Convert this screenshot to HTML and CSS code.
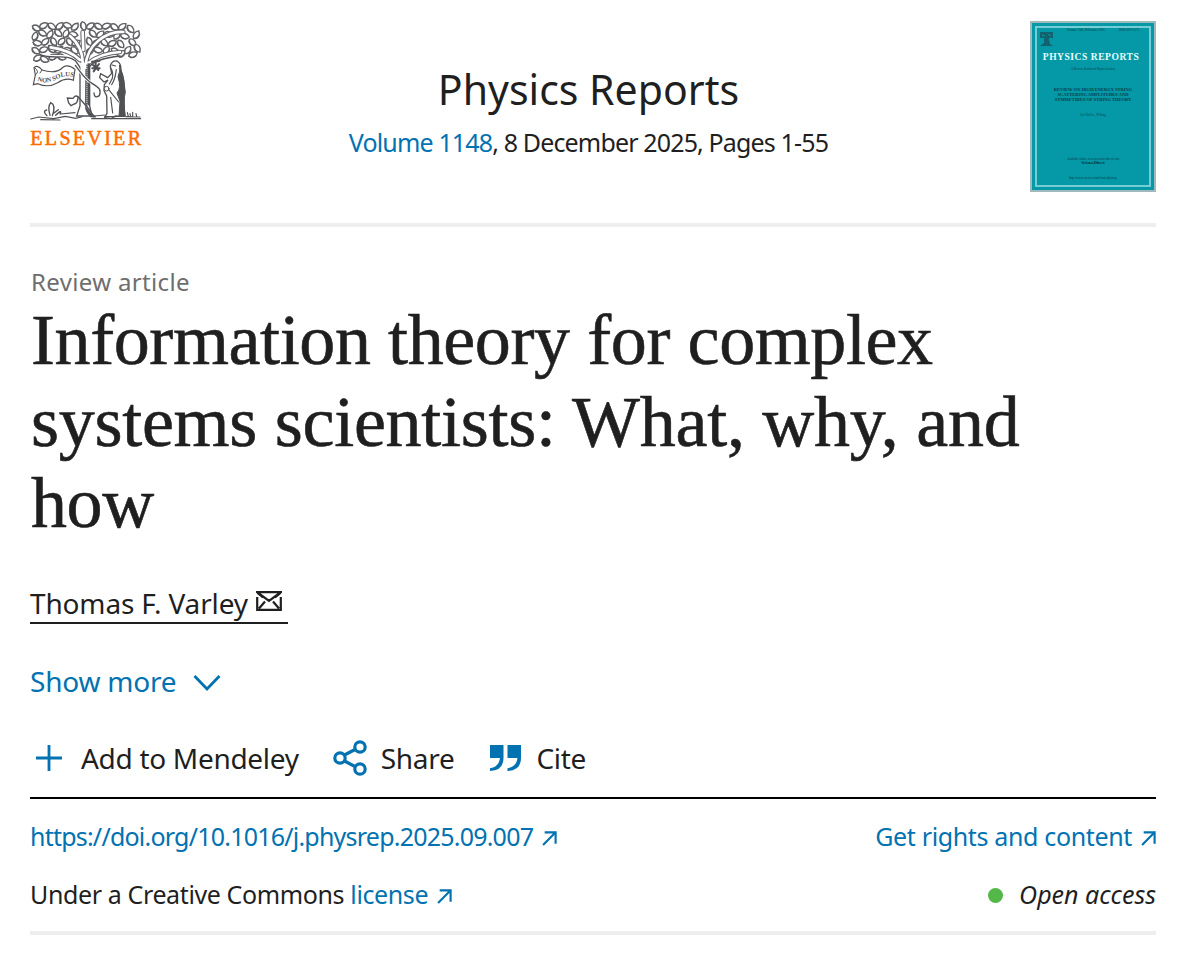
FILE: index.html
```html
<!DOCTYPE html>
<html lang="en">
<head>
  <meta charset="UTF-8">
  <title>Information theory for complex systems scientists</title>
  <link rel="stylesheet" href="styles.css">
</head>
<body>

  <svg class="defs">
    <symbol id="arrow" viewBox="0 0 14 14">
      <path d="M1 13 12.5 1.5M2.5 1.3H12.7V12" fill="none" stroke="currentColor" stroke-width="2"/>
    </symbol>
  </svg>

  <header class="publication">
    <svg class="publisher" viewBox="30 30 339 381">
      <defs>
        <g id="leaf">
          <path d="M-17 1C-12-12 4-13 15-3C9 10-7 13-17 1Z" fill="#fff" stroke="#606165" stroke-width="5"/>
          <path d="M-14 6Q-4 14 9 6" fill="none" stroke="#606165" stroke-width="4"/>
        </g>
      </defs>
      <g id="leaves"></g>
      <g fill="none" stroke="#505155" stroke-linecap="round">
        <!-- trunk and branches -->
        <path d="M60 134C100 150 140 130 166 152L180 172V288L170 318H216L209 288V170Q226 146 300 138" stroke="#505155" stroke-width="4" fill="#fff"/>
        <path d="M196 170Q200 120 235 92T310 66M188 160Q188 110 150 78M180 150Q150 120 92 112M204 160Q240 130 300 126M190 120 188 66" stroke="#606165" stroke-width="14"/>
        <path d="M196 170Q200 120 235 92T310 66M188 160Q188 110 150 78M180 150Q150 120 92 112M204 160Q240 130 300 126M190 120 188 66" stroke="#fff" stroke-width="8"/>
        <path d="M180 158 208 158 205 188H184Z" fill="#fff" stroke="none"/>
        <path d="M198 178V278Q204 304 228 321H212Q194 304 196 284Z" fill="#505155" stroke-width="2"/>
        <path d="M203 164V284" stroke-width="10" stroke-dasharray="3 3" stroke-linecap="butt"/>
        <path d="M206 160V286" stroke-width="7" stroke-linecap="butt"/>
        <path d="M166 166C190 197 192 205 216 220S238 239 235 257Q223 264 222 249" stroke="#fff" stroke-width="9"/>
        <path d="M166 166C190 197 192 205 216 220S244 239 238 257Q223 267 222 249" stroke-width="4"/>
        <path d="M174 260C190 279 205 291 222 321M174 260Q165 254 159 265L142 264 146 279 153 287 163 282Q174 280 174 260Z" fill="#fff" stroke-width="4"/>
        <!-- banner -->
        <path d="M42 173Q53 163 66 180Q108 194 130 171Q145 162 165 178L160 211Q138 201 113 218Q83 235 54 221L40 224 46 195Z" fill="#fff" stroke-width="3.5"/>
        <path d="M44 173Q61 187 46 194M66 180 60 189" stroke-width="3"/>
        <!-- old man -->
        <path d="M271 168Q275 151 291 153Q305 161 302 180Q316 211 311 245L314 319 286 318 274 326 254 323 261 310 260 258 252 242 253 224 264 210 252 216 239 203 242 191 263 203 275 190Z" fill="#fff" stroke-width="4"/>
        <path d="M299 166Q302 184 294 200Q305 235 291 249L300 274 297 319H316Q308 275 316 247Q312 200 299 166Z" fill="#505155" stroke-width="3"/>
        <path d="M271 174Q281 185 277 205L268 222M289 179Q285 210 275 224M276 165 287 168M263 235 296 276M272 262 278 309M254 320H288" stroke-width="3.5"/>
        <circle cx="260" cy="236" r="7" fill="#fff" stroke-width="3"/>
        <path d="M216 155 238 153M227 153V174M219 165 235 180M237 162 221 184M217 175 239 175" stroke-width="6"/>
        <!-- ground -->
        <path d="M32 327 56 321 101 326 136 319 167 325 186 320M62 329 120 330M120 312 165 308M215 326H362M222 318 255 315M318 320 360 321M325 319 322 308M332 320 330 311M338 320V307M350 320 348 311" stroke-width="3.5"/>
        <path d="M90 316Q82 291 92 278Q109 285 97 317M81 317Q66 304 80 300M107 316Q126 297 121 311M102 309 115 299" stroke-width="4"/>
      </g>
      <path id="bannerline" d="M52 213Q83 223 111 207Q134 194 162 201" fill="none"/>
      <text class="motto"><textPath href="#bannerline">NON SOLUS</textPath></text>
      <text class="wordmark" x="31" y="404" textLength="332">ELSEVIER</text>
    </svg>

    <div class="publication-title">
      <h2>Physics Reports</h2>
      <div class="volume"><a>Volume 1148</a>, 8 December 2025, Pages 1-55</div>
    </div>

    <div class="cover">
      <div class="cover-inner">
        <div class="cover-top">
          <svg width="13" height="15" viewBox="0 0 13 15">
            <path d="M0 1H13V7H9L10 13 13 15H0L4 12V7H0Z" fill="#13626f"/>
            <path d="M1 10H3M9 8 11 11M2 4 5 5M8 3 11 5" stroke="#0598a6"/>
          </svg>
          <span>Volume 1148, 08 October 2025</span>
          <span>ISSN 0370-1573</span>
        </div>
        <div class="cover-name">PHYSICS REPORTS</div>
        <div class="cover-note">A Review Section of Physics Letters</div>
        <div class="cover-article">REVIEW ON HIGH ENERGY STRING<br>SCATTERING AMPLITUDES AND<br>SYMMETRIES OF STRING THEORY</div>
        <div class="cover-authors">Jen-Chi Lee, Yi Yang</div>
        <div class="cover-available">Available online at www.sciencedirect.com</div>
        <div class="cover-sd">ScienceDirect</div>
        <div class="cover-url">http://www.elsevier.com/locate/physrep</div>
      </div>
    </div>
  </header>

  <main>
    <div class="article-type">Review article</div>
    <h1>Information theory for complex<br><span>systems scientists: What, why, and</span><br>how</h1>

    <div class="authors">
      <a class="author">
        <span>Thomas F. Varley</span>
        <svg width="26" height="20" viewBox="0 0 26 20">
          <path d="M1.2 6V18.8H24.8V6M1.2 1.2H24.8L13 10ZM1.5 2 7 6.5M24.5 2 19 6.5M3 17.5 9 10.5M23 17.5 17 10.5" fill="none" stroke="currentColor" stroke-width="2.2"/>
        </svg>
      </a>
    </div>

    <div class="show-more">
      <span>Show more</span>
      <svg width="28" height="18" viewBox="0 0 28 18">
        <path d="M1.5 2 14 15 26.500 2" fill="none" stroke="currentColor" stroke-width="2.8"/>
      </svg>
    </div>

    <div class="actions">
      <div class="action mendeley">
        <svg width="28" height="28" viewBox="0 0 28 28">
          <path d="M14 1V27M1 14H27" fill="none" stroke="currentColor" stroke-width="2.8"/>
        </svg>
        <span>Add to Mendeley</span>
      </div>
      <div class="action share">
        <svg width="34" height="36" viewBox="0 0 34 36">
          <g fill="none" stroke="currentColor" stroke-width="3.200">
            <path d="M11.500 15 22 9.500M11.500 21 22 26.500"/>
            <circle cx="7" cy="18" r="5.200"/>
            <circle cx="27" cy="7" r="5.200"/>
            <circle cx="27" cy="29" r="5.200"/>
          </g>
        </svg>
        <span>Share</span>
      </div>
      <div class="action cite">
        <svg width="31" height="26" viewBox="0 0 31 26">
          <path d="M0 0H13.500V13Q13.500 25.500 0 26V23.200Q9 22 10 13H0ZM17.500 0H31V13Q31 25.500 17.500 26V23.200Q26.500 22 27.500 13H17.500Z" fill="currentColor"/>
        </svg>
        <span>Cite</span>
      </div>
    </div>

    <div class="row doi-row">
      <a class="doi"><span>https://doi.org/10.1016/j.physrep.2025.09.007</span><svg class="arrow"><use href="#arrow"/></svg></a>
      <a class="rights"><span>Get rights and content</span><svg class="arrow"><use href="#arrow"/></svg></a>
    </div>
    <div class="row license-row">
      <div class="license">Under a Creative Commons <a>license<svg class="arrow"><use href="#arrow"/></svg></a></div>
      <div class="access"><span class="dot"></span><em>Open access</em></div>
    </div>
  </main>

  <script>
    // x, y, rotation of every leaf in the crown
    const leaves = [
      [50, 55, 30], [72, 47, -20], [96, 50, 40], [120, 48, -35], [143, 47, 25], [166, 50, -40],
      [190, 49, 80], [212, 48, -30], [236, 50, 35], [260, 48, -15], [284, 52, 40], [308, 50, -30],
      [332, 58, 55], [350, 74, -50], [46, 78, -60], [68, 70, 35], [91, 73, -50], [115, 70, 50],
      [139, 70, -55], [161, 74, 20], [219, 72, 50], [242, 73, -35], [267, 74, 25], [292, 76, -45],
      [315, 79, 20], [338, 98, 50], [53, 100, 15], [77, 95, -35], [101, 96, 65], [126, 94, -40],
      [149, 97, 60], [169, 99, -20], [208, 96, 70], [229, 99, -30], [253, 98, 50], [278, 100, -20],
      [302, 103, 60], [324, 120, -45], [352, 116, 65], [48, 123, 40], [72, 119, -15], [95, 118, 55],
      [119, 119, -35], [143, 121, 10], [164, 122, 50], [211, 123, -30], [235, 121, 20],
      [260, 120, -50], [286, 124, 35], [305, 131, -30], [54, 144, -25], [74, 149, 30],
      [100, 141, -20], [125, 142, 30], [340, 134, -15]
    ];
    document.getElementById('leaves').innerHTML = leaves.map(([x, y, r]) =>
      `<use href="#leaf" transform="translate(${x} ${y}) rotate(${r}) scale(.85)"/>`
    ).join('');
  </script>

</body>
</html>
```
FILE: styles.css
```css
body {
  margin: 0;
  padding: 0 44px 0 30px;
  background: #fff;
  color: #1f1f1f;
  font-family: "Noto Sans", sans-serif;
  font-size: 28px;
  line-height: 40px;
}
a {
  color: #0272b1;
}
h1, h2 {
  margin: 0;
  font-weight: 400;
}
svg {
  flex: none;
}
.defs {
  display: none;
}

/* header */
.publication {
  display: flex;
  align-items: flex-start;
  height: 202px;
  padding-top: 21px;
  border-bottom: 4px solid #eee;
}
.publisher {
  width: 113px;
  height: 127px;
  margin-top: -1px;
  overflow: visible;
}
.motto {
  font: bold 19.500px "Liberation Serif", serif;
  fill: #505155;
}
.wordmark {
  font: 60px "Liberation Serif", serif;
  fill: #ff6c00;
  stroke: #ff6c00;
  stroke-width: 1.5px;
}
.publication-title {
  flex: 1;
  padding: 43px 0 0 4px;
  text-align: center;
}
.publication-title h2 {
  font-size: 41px;
  line-height: 50px;
}
.volume {
  margin-top: 11px;
  font-size: 25px;
  line-height: 34px;
  letter-spacing: -0.85px;
}

/* journal cover */
.cover {
  box-sizing: border-box;
  width: 126px;
  height: 171px;
  padding: 3px;
  border: 2px solid #9fb9bc;
  background: #0598a6;
}
.cover-inner {
  box-sizing: border-box;
  height: 161px;
  border: 2px solid #74ccd4;
  color: #073f48;
  font: 3px/4px "Liberation Serif", serif;
  text-align: center;
}
.cover-top {
  display: flex;
  justify-content: space-between;
  height: 23px;
  padding: 0 10px 0 3px;
}
.cover-top svg {
  margin-top: 3px;
}
.cover-name {
  margin-left: -4px;
  color: #e6ffff;
  font-size: 9.600px;
  font-weight: bold;
  line-height: 12px;
  letter-spacing: 0.5px;
  white-space: nowrap;
}
.cover-note {
  margin-top: 4px;
}
.cover-article {
  margin-top: 16px;
  font-size: 4.500px;
  font-weight: bold;
  line-height: 5px;
}
.cover-authors {
  margin-top: 11px;
}
.cover-available {
  margin-top: 40px;
}
.cover-sd {
  color: #022b32;
  font-size: 4px;
  font-weight: bold;
}
.cover-url {
  margin-top: 11px;
}

/* article head */
.article-type {
  margin-top: 38px;
  padding-left: 1px;
  color: #6e6e6e;
  font-size: 24px;
  line-height: 34px;
  letter-spacing: 0.35px;
}
h1 {
  padding: 1px 0 0 1px;
  font-family: "Liberation Serif", serif;
  font-size: 72px;
  line-height: 81.5px;
  letter-spacing: -0.4px;
  -webkit-text-stroke: 0.6px #1f1f1f;
}
h1 span {
  letter-spacing: -0.28px;
}
.authors {
  display: flex;
  margin-top: 38px;
}
.author {
  display: flex;
  gap: 8px;
  height: 39px;
  padding-right: 6px;
  border-bottom: 2px solid #1f1f1f;
  color: #1f1f1f;
  letter-spacing: -0.15px;
}
.author svg {
  margin-top: 8px;
}
.show-more {
  display: flex;
  align-items: center;
  gap: 17px;
  margin-top: 37px;
  color: #0272b1;
  letter-spacing: -0.2px;
}
.show-more svg {
  margin-top: 4px;
}
.actions {
  display: flex;
  gap: 34px;
  height: 59px;
  margin-top: 37px;
  padding-left: 5px;
  border-bottom: 2px solid #000;
}
.action {
  display: flex;
  align-items: center;
  gap: 14px;
  height: 40px;
  letter-spacing: -0.3px;
}
.action svg {
  color: #0272b1;
}
.mendeley {
  gap: 18px;
}
.cite {
  gap: 15px;
  margin-left: 2px;
}

/* links under the rule */
.row {
  display: flex;
  justify-content: space-between;
  font-size: 25px;
}
.doi-row {
  margin-top: 17px;
}
.doi {
  letter-spacing: -0.78px;
}
.rights {
  letter-spacing: -0.35px;
}
.license {
  letter-spacing: -0.38px;
}
.arrow {
  width: 15px;
  height: 15px;
  margin-left: 9px;
}
.license-row {
  height: 57px;
  margin-top: 18px;
  border-bottom: 4px solid #eee;
}
.access {
  display: flex;
  align-items: center;
  height: 40px;
  gap: 16px;
}
.dot {
  width: 15px;
  height: 15px;
  margin-top: 3px;
  border-radius: 50%;
  background: #53b848;
}
```
